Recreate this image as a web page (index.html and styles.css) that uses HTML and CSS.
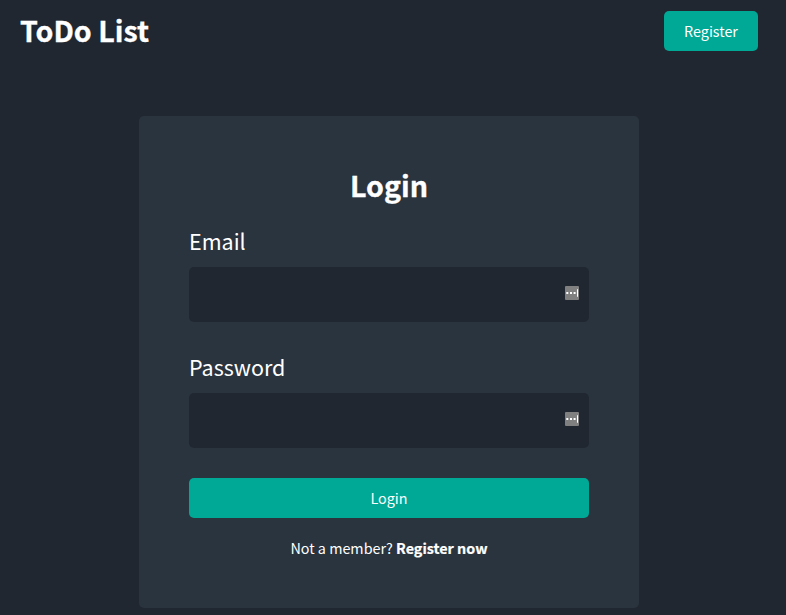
FILE: index.html
```html
<!DOCTYPE html>
<html lang="en">
<head>
<meta charset="utf-8">
<title>ToDo List</title>
<link rel="stylesheet" href="styles.css">
</head>
<body>
<header class="navbar">
  <div class="brand">ToDo List</div>
  <button class="button nav-button">Register</button>
</header>
<main class="card">
  <h1>Login</h1>
  <form>
    <label for="email">Email</label>
    <div class="field">
      <input id="email" type="email">
      <svg class="manager" viewBox="0 0 14 14"><rect width="14" height="14" rx="1" fill="#808080"/><path d="M1.3 6h2v2h-2zM5 6h2v2H5zM8.6 6h2v2h-2zM12 3.3h1v7.4h-1z" fill="#fff"/></svg>
    </div>
    <label for="password">Password</label>
    <div class="field">
      <input id="password" type="password">
      <svg class="manager" viewBox="0 0 14 14"><rect width="14" height="14" rx="1" fill="#808080"/><path d="M1.3 6h2v2h-2zM5 6h2v2H5zM8.6 6h2v2h-2zM12 3.3h1v7.4h-1z" fill="#fff"/></svg>
    </div>
    <button class="button submit" type="button">Login</button>
  </form>
  <p class="signup">Not a member? <a>Register now</a></p>
</main>
</body>
</html>
```
FILE: styles.css
```css
* { box-sizing: border-box; }
body {
  margin: 0;
  height: 615px;
  overflow: hidden;
  background: #202731;
  color: #fff;
  font-family: "Noto Sans CJK SC", "Noto Sans", sans-serif;
}
.navbar {
  display: flex;
  align-items: center;
  justify-content: space-between;
  height: 62px;
  padding: 0 28px 0 20px;
}
.brand, h1 {
  font-size: 28.6px;
  line-height: 38px;
  font-weight: 700;
  -webkit-text-stroke: 0.3px #fff;
}
.brand { padding-bottom: 2px; }
.button {
  height: 40px;
  padding: 0 0 2px;
  border: 0;
  border-radius: 5px;
  background: #00a896;
  color: #fff;
  font: inherit;
  font-size: 14.35px;
}
.nav-button { width: 94px; }
.card {
  width: 500px;
  height: 492px;
  margin: 54px 0 0 139px;
  padding: 50px;
  border-radius: 5px;
  background: #2a343e;
}
h1 { margin: 0 0 18px; text-align: center; }
label { display: block; height: 45px; font-size: 21.5px; line-height: 38px; }
.field { position: relative; height: 55px; margin-bottom: 26px; }
input {
  width: 400px;
  height: 55px;
  border: 0;
  border-radius: 5px;
  background: #202731;
}
.manager { position: absolute; right: 10px; top: 19px; width: 14px; height: 14px; }
.submit { display: block; width: 100%; margin-top: 30px; }
.signup { margin: 19px 0 0; font-size: 14.35px; line-height: 21px; text-align: center; }
.signup a { font-weight: 700; -webkit-text-stroke: 0.2px #fff; }
```
